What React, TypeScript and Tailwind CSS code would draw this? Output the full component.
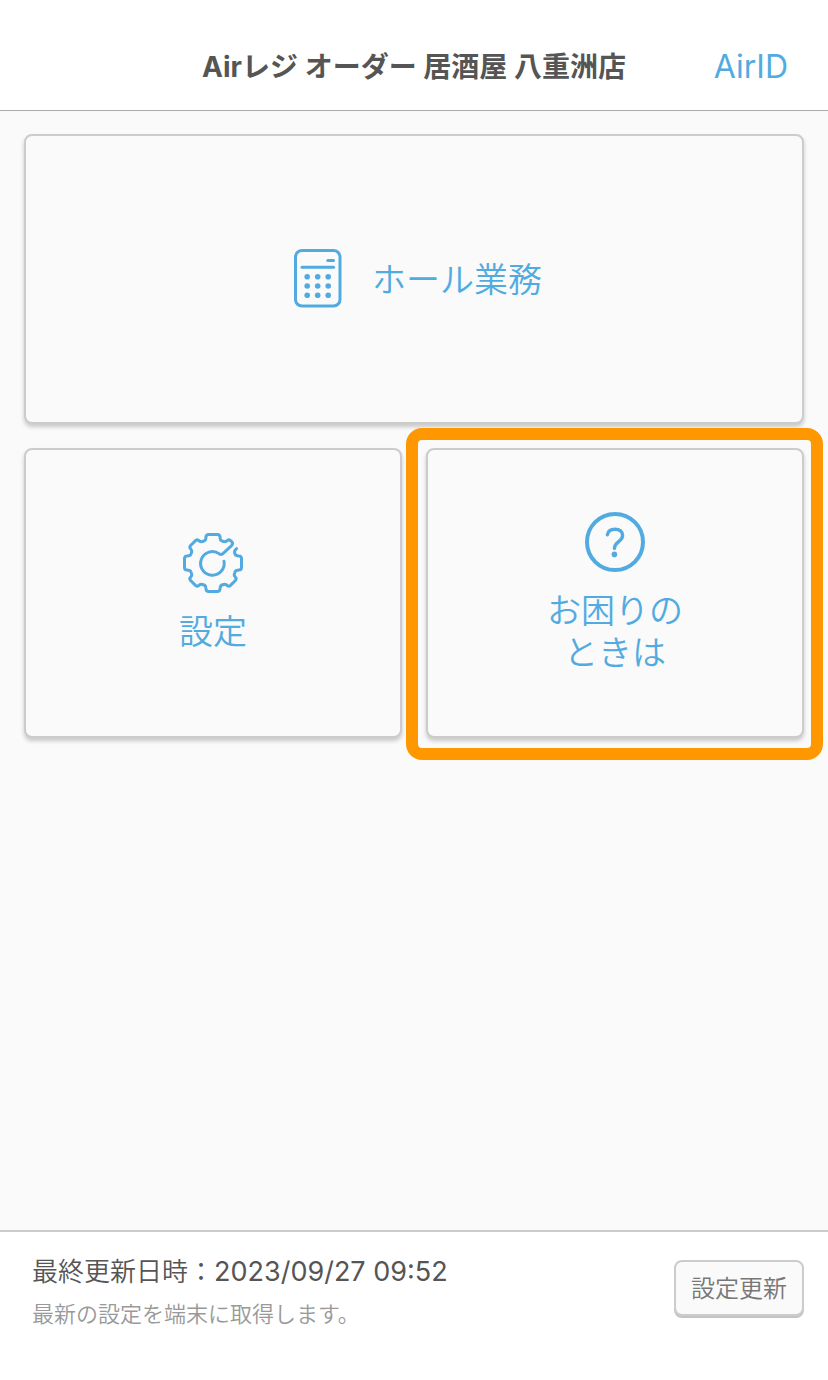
import type { ReactNode } from 'react';

const CalculatorIcon = () => (
  <svg viewBox="0 0 48 60" className="h-[60px] w-12" fill="none" stroke="currentColor" strokeLinecap="round" aria-hidden="true">
    <rect x="1.5" y="2.5" width="44.5" height="55.5" rx="6.5" strokeWidth="3" />
    <path d="M8 19.3H39.5" strokeWidth="3" />
    <path d="M33.8 12.5H39.5" strokeWidth="3" />
    <g fill="currentColor" stroke="none">
      {[28.7, 38, 47.3].map((y) => [13.2, 23.7, 34.2].map((x) => <circle key={`${x}-${y}`} cx={x} cy={y} r="2.8" />))}
    </g>
  </svg>
);

const GearIcon = () => (
  <svg
    viewBox="0 0 60 60"
    className="size-[60px]"
    fill="none"
    stroke="currentColor"
    strokeWidth="3"
    strokeLinecap="round"
    strokeLinejoin="round"
    aria-hidden="true"
  >
    <path d="M41 28.2A11.8 11.8 0 1 1 36.4 20.9Q38.2 22 39.6 20.8L48.6 12.6Q50.4 10.6 48.8 8.8L47.6 7.6Q45.6 6 43.6 8Q42 9.4 39.6 8.2Q37.4 7.6 37.2 5.6L37 4Q36.8 1.5 34.4 1.5H25.6Q23.2 1.5 23 4L22.8 5.6Q22.6 7.6 20.4 8.2Q18 9.4 16.4 8Q14.6 5.9 12.5 7.6L7.6 12.5Q5.9 14.6 8 16.4Q9.4 18 8.2 20.4Q7.6 22.6 5.6 22.8L4 23Q1.5 23.2 1.5 25.6V34.4Q1.5 36.8 4 37L5.6 37.2Q7.6 37.4 8.2 39.6Q9.4 42 8 43.6Q5.9 45.4 7.6 47.5L12.5 52.4Q14.6 54.1 16.4 52Q18 50.6 20.4 51.8Q22.6 52.4 22.8 54.4L23 56Q23.2 58.5 25.6 58.5H34.4Q36.8 58.5 37 56L37.2 54.4Q37.4 52.4 39.6 51.8Q42 50.6 43.6 52Q45.4 54.1 47.5 52.4L52.4 47.5Q54.1 45.4 52 43.6Q50.6 42 51.8 39.6Q52.4 37.4 54.4 37.2L56 37Q58.5 36.8 58.5 34.4V25.6Q58.5 23.2 56 23L54.4 22.8Q52.4 22.6 51.8 20.4Q50.8 17.6 53.6 15.6" />
  </svg>
);

const HelpIcon = () => (
  <svg viewBox="0 0 60 60" className="size-[60px]" fill="none" stroke="currentColor" strokeLinecap="round" aria-hidden="true">
    <circle cx="30" cy="30" r="28" strokeWidth="4" />
    <path d="M22.4 22.8C23 18.8 26 17.2 30 17.2C34.6 17.2 37.6 19.6 37.6 23.4C37.6 26.2 36 27.8 33.4 29.8C30.6 32 29.4 33.2 29.4 36.4" strokeWidth="3.4" />
    <circle cx="29.4" cy="42.4" r="2.8" fill="currentColor" stroke="none" />
  </svg>
);

const MenuButton = ({ className, children }: { className: string; children: ReactNode }) => (
  <button
    type="button"
    className={`flex h-[290px] w-full items-center justify-center rounded-lg border-2 border-[#ccc] bg-[#fafafa] pb-0.5 text-[34px] leading-[42px] font-[350] text-[#52abe0] shadow-[0_3px_4px_rgba(0,0,0,0.2)] ${className}`}
  >
    {children}
  </button>
);

export default function App() {
  return (
    <div className="flex min-h-screen flex-col bg-[#fafafa] font-['Noto_Sans_CJK_JP',sans-serif]">
      <header className="relative flex h-[110px] items-center justify-center bg-white pt-6 shadow-[0_1px_0_#aaa]">
        <h1 className="font-['Inter','Noto_Sans_CJK_JP',sans-serif] text-[28px] leading-10 font-bold text-[#555]">
          Airレジ オーダー 居酒屋 八重洲店
        </h1>
        <a href="#airid" className="absolute right-10 font-['Inter','Noto_Sans_CJK_JP',sans-serif] text-[32px] leading-10 text-[#52abe0]">
          AirID
        </a>
      </header>
      <main className="grid flex-1 grid-cols-2 content-start gap-6 p-6">
        <div className="col-span-2">
          <MenuButton className="gap-[30px] pl-2">
            <CalculatorIcon />
            <span>ホール業務</span>
          </MenuButton>
        </div>
        <MenuButton className="flex-col gap-4">
          <GearIcon />
          <span>設定</span>
        </MenuButton>
        <div className="relative">
          <MenuButton className="flex-col gap-4">
            <HelpIcon />
            <span>
              お困りの
              <br />
              ときは
            </span>
          </MenuButton>
          <div className="pointer-events-none absolute -top-5 -right-[19px] -bottom-[22px] -left-5 rounded-2xl border-12 border-[#ff9800]" />
        </div>
      </main>
      <footer className="flex h-[150px] items-start justify-between border-t-2 border-[#ccc] bg-white pt-[18px] pr-6 pl-8">
        <div className="font-[350]">
          <p className="text-[26px] leading-10 text-[#555]">
            最終更新日時：<time className="font-['Inter',sans-serif] text-[27px] font-normal">2023/09/27 09:52</time>
          </p>
          <p className="text-[22px] leading-10 text-[#999]">最新の設定を端末に取得します。</p>
        </div>
        <button
          type="button"
          className="mt-2.5 h-14 w-[130px] rounded-lg border-2 border-[#ccc] bg-[#fafafa] pb-0.5 text-2xl font-[350] text-[#777] shadow-[0_2px_0_#c4c4c4]"
        >
          設定更新
        </button>
      </footer>
    </div>
  );
}
